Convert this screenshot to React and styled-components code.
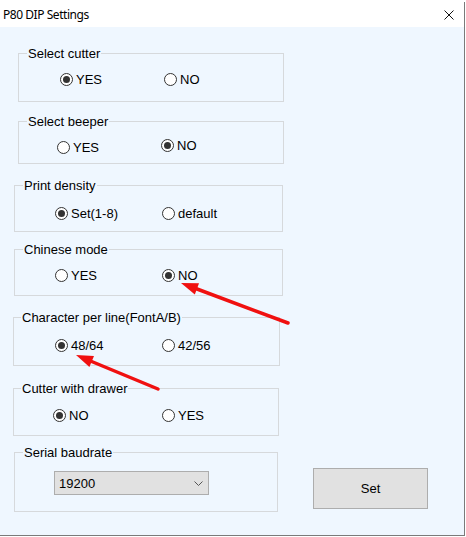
import React from 'react';
import styled, { createGlobalStyle } from 'styled-components';

const BG = '#eff7ff';

const Global = createGlobalStyle`
  html, body { margin: 0; padding: 0; background: #ffffff; }
  body { font-family: "Liberation Sans", Arial, sans-serif; }
`;

const Window = styled.div`
  position: relative;
  margin-top: 2px;
  width: 465px;
  height: 534px;
  box-sizing: border-box;
  border-right: 1px solid #7a7a7a;
  border-bottom: 1px solid #7a7a7a;
  background: ${BG};
  display: flex;
  flex-direction: column;
`;

const TitleBar = styled.div`
  height: 25px;
  flex: none;
  background: #ffffff;
  display: flex;
  align-items: center;
  justify-content: space-between;
  padding: 0 10px 0 3px;
  font-family: "Noto Sans", "Segoe UI", sans-serif;
  font-size: 12px;
  letter-spacing: -0.45px;
  color: #000;
`;

const Title = styled.span`
  line-height: 16px;
`;

const Content = styled.div`
  display: flex;
  flex-direction: column;
  align-items: flex-start;
`;

const Group = styled.div`
  position: relative;
  box-sizing: border-box;
  margin: ${(p) => p.$mt}px 0 0 ${(p) => p.$x}px;
  width: ${(p) => p.$w}px;
  height: ${(p) => p.$h}px;
  border: 1px solid #d6d9dc;
`;

const Legend = styled.span`
  position: absolute;
  top: -8px;
  left: ${(p) => p.$lx}px;
  padding: 0 1px;
  background: ${BG};
  font-size: 13px;
  line-height: 15px;
  color: #000;
  white-space: nowrap;
`;

const Row = styled.div`
  display: flex;
  padding: ${(p) => p.$pt}px 0 0 ${(p) => p.$pl}px;
`;

const Option = styled.label`
  display: flex;
  align-items: center;
  gap: 3px;
  width: ${(p) => (p.$w ? `${p.$w}px` : 'auto')};
  height: 15px;
  margin-top: ${(p) => p.$dy || 0}px;
  font-size: 13px;
  line-height: 15px;
  color: #000;
`;

const Dot = styled.span`
  position: relative;
  flex: none;
  width: 13px;
  height: 13px;
  box-sizing: border-box;
  border: 1px solid #333;
  border-radius: 50%;
  background: #fff;
  &::after {
    content: '';
    display: ${(p) => (p.$checked ? 'block' : 'none')};
    position: absolute;
    left: 2px;
    top: 2px;
    width: 7px;
    height: 7px;
    border-radius: 50%;
    background: #333;
  }
`;

const BottomRow = styled.div`
  display: flex;
  align-items: flex-start;
`;

const Select = styled.div`
  box-sizing: border-box;
  margin: 18px 0 0 39px;
  width: 155px;
  height: 24px;
  background: #e1e1e1;
  border: 1px solid #adadad;
  display: flex;
  align-items: center;
  justify-content: space-between;
  padding: 0 5px 0 4px;
  font-size: 13px;
  color: #000;
`;

const Button = styled.div`
  box-sizing: border-box;
  margin: 32px 0 0 35px;
  width: 115px;
  height: 41px;
  background: #e1e1e1;
  border: 1px solid #adadad;
  display: flex;
  align-items: center;
  justify-content: center;
  font-size: 13px;
  color: #000;
`;

const Overlay = styled.svg`
  position: absolute;
  left: 0;
  top: 0;
  pointer-events: none;
`;

const groups = [
  { title: 'Select cutter', x: 18, w: 266, h: 49, mt: 26, lx: 8, cy: 26, c1: 49, c2: 153,
    opts: [{ label: 'YES', checked: true }, { label: 'NO' }] },
  { title: 'Select beeper', x: 18, w: 266, h: 43, mt: 19, lx: 8, cy: 25, c1: 46, c2: 150,
    opts: [{ label: 'YES', dy: 1 }, { label: 'NO', checked: true, dy: -1 }] },
  { title: 'Print density', x: 14, w: 269, h: 47, mt: 21, lx: 8, cy: 28, c1: 48, c2: 155,
    opts: [{ label: 'Set(1-8)', checked: true }, { label: 'default' }] },
  { title: 'Chinese mode', x: 14, w: 269, h: 47, mt: 17, lx: 8, cy: 26, c1: 48, c2: 155,
    opts: [{ label: 'YES' }, { label: 'NO', checked: true }] },
  { title: 'Character per line(FontA/B)', x: 13, w: 267, h: 49, mt: 21, lx: 7, cy: 28, c1: 49, c2: 156,
    opts: [{ label: '48/64', checked: true }, { label: '42/56' }] },
  { title: 'Cutter with drawer', x: 13, w: 266, h: 48, mt: 22, lx: 7, cy: 27, c1: 47, c2: 156,
    opts: [{ label: 'NO', checked: true }, { label: 'YES' }] },
];

function RadioGroup({ g }) {
  return (
    <Group $x={g.x} $w={g.w} $h={g.h} $mt={g.mt}>
      <Legend $lx={g.lx}>{g.title}</Legend>
      <Row $pt={g.cy - 8} $pl={g.c1 - 8}>
        {g.opts.map((o, i) => (
          <Option key={i} $w={i === 0 ? g.c2 - g.c1 : 0} $dy={o.dy}>
            <Dot $checked={o.checked} />
            {o.label}
          </Option>
        ))}
      </Row>
    </Group>
  );
}

function Arrow({ x1, y1, x2, y2 }) {
  const dx = x2 - x1;
  const dy = y2 - y1;
  const len = Math.hypot(dx, dy);
  const ux = dx / len;
  const uy = dy / len;
  const L = 17;
  const W = 6;
  const bx = x2 - ux * L;
  const by = y2 - uy * L;
  const nx = -uy;
  const ny = ux;
  const pts = `${x2},${y2} ${bx + nx * W},${by + ny * W} ${bx - nx * W},${by - ny * W}`;
  return (
    <g>
      <line x1={x1} y1={y1} x2={bx + ux * 2} y2={by + uy * 2} stroke="#f01010" strokeWidth="3.5" strokeLinecap="round" />
      <polygon points={pts} fill="#f01010" />
    </g>
  );
}

export default function App() {
  return (
    <>
      <Global />
      <Window>
        <TitleBar>
          <Title>P80 DIP Settings</Title>
          <svg width="10" height="10" viewBox="0 0 10 10">
            <path d="M0.5 0.5 L9.5 9.5 M9.5 0.5 L0.5 9.5" stroke="#111" strokeWidth="1" fill="none" />
          </svg>
        </TitleBar>
        <Content>
          {groups.map((g, i) => (
            <RadioGroup key={i} g={g} />
          ))}
          <BottomRow>
            <Group $x={14} $w={264} $h={60} $mt={16}>
              <Legend $lx={8}>Serial baudrate</Legend>
              <Select>
                <span>19200</span>
                <svg width="9" height="5" viewBox="0 0 9 5">
                  <path d="M0.5 0.5 L4.5 4.5 L8.5 0.5" stroke="#555" strokeWidth="1" fill="none" />
                </svg>
              </Select>
            </Group>
            <Button>Set</Button>
          </BottomRow>
        </Content>
        <Overlay width="464" height="534">
          <Arrow x1={288} y1={321} x2={181} y2={281} />
          <Arrow x1={158} y1={387} x2={76} y2={353} />
        </Overlay>
      </Window>
    </>
  );
}
